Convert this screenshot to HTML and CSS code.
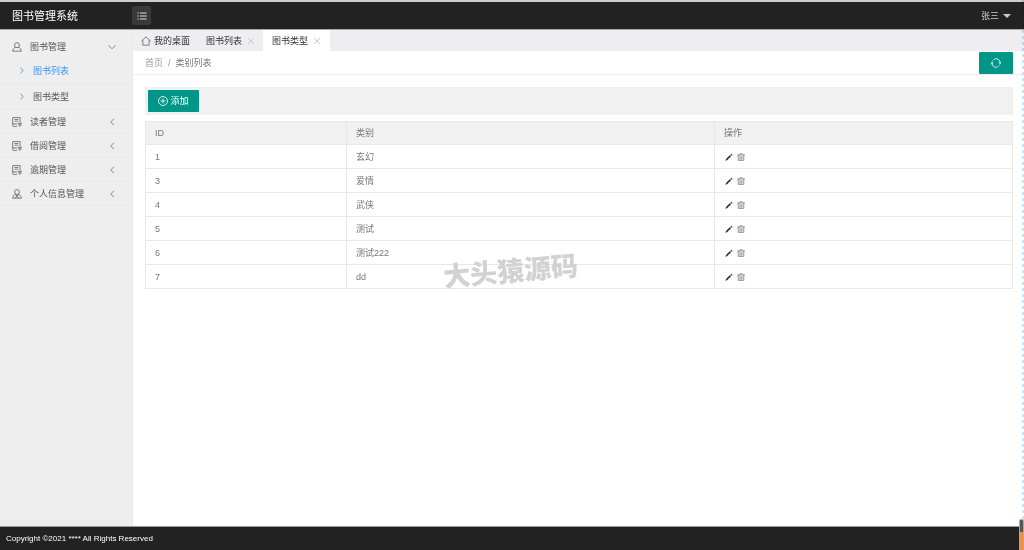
FILE: index.html
```
<!DOCTYPE html>
<html lang="zh-CN">
<head>
<meta charset="utf-8">
<meta name="viewport" content="width=device-width, initial-scale=1">
<title>图书管理系统</title>
<link rel="stylesheet" href="styles.css">
</head>
<body>
<svg class="sprite" aria-hidden="true">
  <symbol id="user" viewBox="0 0 12 12"><circle cx="6" cy="3.800" r="3"/><path d="M4.300 6.300C2.200 7 .900 8.600.700 11h10.600C11.100 8.600 9.800 7 7.700 6.300"/></symbol>
  <symbol id="member" viewBox="0 0 12 12"><circle cx="6" cy="3.600" r="2.900"/><path d="M4.300 6C2.200 7 .900 8.700.700 11h10.600C11.100 8.700 9.800 7 7.700 6M4 11L6 8l2 3M4 7l2 1 2-1"/></symbol>
  <symbol id="book" viewBox="0 0 12 12"><path d="M6 11.300H1.800a1 1 0 0 1-1-1V.700h9v5.600M.800 8.300h5.700M3 3h4.600M3 5h4.600M7 7.500h5M9.400 7.500v4.200M7.500 9.500H11.500"/></symbol>
  <symbol id="down" viewBox="0 0 8 8"><path d="M.500 2.300L4 5.800l3.500-3.500"/></symbol>
  <symbol id="left" viewBox="0 0 8 8"><path d="M6 .800L2.700 4 6 7.200"/></symbol>
  <symbol id="right" viewBox="0 0 8 8"><path d="M2.700.800L6 4 2.700 7.200"/></symbol>
  <symbol id="close" viewBox="0 0 8 8"><path d="M1 1l6 6M7 1L1 7"/></symbol>
  <symbol id="home" viewBox="0 0 12 12"><path d="M.500 6.200L6 1l5.500 5.200M2.300 5v6h7.400V5"/></symbol>
  <symbol id="list" viewBox="0 0 12 12"><path class="bold" d="M.500 2.400H2M3.500 2.400h8M.500 6H2M3.500 6h8M.500 9.600H2M3.500 9.600h8"/></symbol>
  <symbol id="plus" viewBox="0 0 12 12"><circle cx="6" cy="6" r="5.400"/><path d="M6 3v6M3 6h6"/></symbol>
  <symbol id="refresh" viewBox="0 0 12 12"><path d="M4 1.300A5 5 0 0 1 11 6M8 10.700A5 5 0 0 1 1 6M9.300 5l1.600 1.600L12 5M0 7l1.100-1.600L2.700 7"/><path class="faint" d="M1 6A5 5 0 0 1 4 1.300M11 6A5 5 0 0 1 8 10.700"/></symbol>
  <symbol id="edit" viewBox="0 0 8 8"><path class="solid" d="M.500 7.700L1 6.100 5 2.100l1.100 1.100L2.100 7.200zM5.500 1.600l.9-.9 1.100 1.100-.9.900z"/></symbol>
  <symbol id="trash" viewBox="0 0 8 8"><path class="wash" d="M1.200 2h5.600v5.400H1.200z"/><path d="M0 1.900h8M2.700 1.500V.700h2.600v.800M1.200 2v5.400h5.600V2M3.200 3.400v3M4.800 3.400v3"/></symbol>
</svg>
<header class="header">
  <h1 class="brand">图书管理系统</h1>
  <button class="toggle" aria-label="菜单"><svg class="icon"><use href="#list"/></svg></button>
  <button class="account">张三<span class="caret"></span></button>
</header>
<div class="layout">
  <nav class="sidebar">
    <a class="item open" href="#"><svg class="icon"><use href="#user"/></svg><span>图书管理</span><svg class="arrow"><use href="#down"/></svg></a>
    <a class="sub active" href="#"><svg class="chevron"><use href="#right"/></svg>图书列表</a>
    <a class="sub" href="#"><svg class="chevron"><use href="#right"/></svg>图书类型</a>
    <a class="item" href="#"><svg class="icon"><use href="#book"/></svg><span>读者管理</span><svg class="arrow"><use href="#left"/></svg></a>
    <a class="item" href="#"><svg class="icon"><use href="#book"/></svg><span>借阅管理</span><svg class="arrow"><use href="#left"/></svg></a>
    <a class="item" href="#"><svg class="icon"><use href="#book"/></svg><span>逾期管理</span><svg class="arrow"><use href="#left"/></svg></a>
    <a class="item" href="#"><svg class="icon"><use href="#member"/></svg><span>个人信息管理</span><svg class="arrow"><use href="#left"/></svg></a>
  </nav>
  <main class="main">
    <div class="tabs">
      <a class="tab home" href="#"><svg class="icon"><use href="#home"/></svg>我的桌面</a>
      <a class="tab" href="#">图书列表<svg class="close"><use href="#close"/></svg></a>
      <a class="tab current" href="#">图书类型<svg class="close"><use href="#close"/></svg></a>
    </div>
    <div class="crumbs">
      <a href="#">首页</a><span class="slash">/</span><span class="here">类别列表</span>
      <button class="refresh" aria-label="刷新"><svg class="icon"><use href="#refresh"/></svg></button>
    </div>
    <div class="content">
      <div class="toolbar"><button class="add"><svg class="icon"><use href="#plus"/></svg>添加</button></div>
      <table class="table">
        <thead><tr><th class="col-id">ID</th><th class="col-name">类别</th><th>操作</th></tr></thead>
        <tbody>
          <tr><td>1</td><td>玄幻</td><td><button class="act" aria-label="编辑"><svg class="edit"><use href="#edit"/></svg></button><button class="act" aria-label="删除"><svg class="trash"><use href="#trash"/></svg></button></td></tr>
          <tr><td>3</td><td>爱情</td><td><button class="act" aria-label="编辑"><svg class="edit"><use href="#edit"/></svg></button><button class="act" aria-label="删除"><svg class="trash"><use href="#trash"/></svg></button></td></tr>
          <tr><td>4</td><td>武侠</td><td><button class="act" aria-label="编辑"><svg class="edit"><use href="#edit"/></svg></button><button class="act" aria-label="删除"><svg class="trash"><use href="#trash"/></svg></button></td></tr>
          <tr><td>5</td><td>测试</td><td><button class="act" aria-label="编辑"><svg class="edit"><use href="#edit"/></svg></button><button class="act" aria-label="删除"><svg class="trash"><use href="#trash"/></svg></button></td></tr>
          <tr><td>6</td><td>测试222</td><td><button class="act" aria-label="编辑"><svg class="edit"><use href="#edit"/></svg></button><button class="act" aria-label="删除"><svg class="trash"><use href="#trash"/></svg></button></td></tr>
          <tr><td>7</td><td>dd</td><td><button class="act" aria-label="编辑"><svg class="edit"><use href="#edit"/></svg></button><button class="act" aria-label="删除"><svg class="trash"><use href="#trash"/></svg></button></td></tr>
        </tbody>
      </table>
    </div>
  </main>
</div>
<footer class="footer">Copyright ©2021 **** All Rights Reserved</footer>
<div class="watermark">大头猿源码</div>
<div class="edge"></div>
<div class="gauge"></div>
</body>
</html>
```
FILE: styles.css
```
* { box-sizing: border-box; }
body {
  margin: 0;
  min-height: 100vh;
  display: flex;
  flex-direction: column;
  position: relative;
  font: 9px/12px "Liberation Sans", "Noto Sans CJK SC", sans-serif;
  color: #555;
  background: #fff;
}
a { color: inherit; text-decoration: none; }
button { font: inherit; color: inherit; border: 0; padding: 0; background: none; cursor: pointer; }
svg { fill: none; stroke: currentColor; stroke-width: 1; flex: none; }
.sprite { position: absolute; width: 0; height: 0; }
.icon { width: 10px; height: 10px; }
.faint { opacity: .5; }
.bold { stroke-width: 1.3; }
.solid { fill: currentColor; stroke: none; }
.wash { fill: currentColor; stroke: none; opacity: .25; }

.header {
  height: 30px;
  display: flex;
  align-items: center;
  padding: 0 13px 0 12px;
  background: #222;
  color: #fff;
  border-top: 2px solid #c9d0d0;
  border-bottom: 1px solid #aaa;
}
.brand { margin: 0; width: 120px; font-size: 11px; line-height: 16px; font-weight: 400; }
.toggle {
  width: 19px;
  height: 19px;
  display: grid;
  place-items: center;
  background: #393939;
  color: #ddd;
  border-radius: 2px;
}
.account { margin-left: auto; display: flex; align-items: center; gap: 4px; color: #ccc; }
.caret { border: 4px solid transparent; border-top-color: #ccc; border-bottom: 0; }

.layout { flex: 1; display: flex; }
.sidebar { width: 133px; background: #eee; border-right: 1px solid #eaeaea; }
.item {
  height: 24px;
  display: flex;
  align-items: center;
  gap: 8px;
  padding: 0 16px 0 12px;
  border-bottom: 1px solid #e8e8e8;
}
.item .icon { color: #666; }
.item.open { height: 28px; padding-top: 5px; border-bottom: 0; }
.arrow { width: 8px; height: 8px; margin-left: auto; color: #888; }
.sub {
  height: 26px;
  display: flex;
  align-items: center;
  gap: 8px;
  padding-left: 18px;
  border-bottom: 1px solid #e8e8e8;
}
.chevron { width: 7px; height: 7px; color: #888; }
.active, .active .chevron { color: #3d97f5; }

.main { flex: 1; min-width: 0; }
.tabs { height: 21px; display: flex; background: #eeeef0; color: #333; }
.tab { display: flex; align-items: center; gap: 5px; padding: 0 8px; }
.home { gap: 3px; }
.home .icon { color: #666; }
.current { padding: 0 9px; background: #fff; }
.close { width: 8px; height: 8px; color: #ccc; }
.crumbs {
  height: 24px;
  display: flex;
  align-items: center;
  gap: 5px;
  padding: 0 11px 0 12px;
  border-bottom: 1px solid #eee;
  color: #999;
}
.here { color: #777; }
.refresh {
  margin-left: auto;
  width: 34px;
  height: 22px;
  display: grid;
  place-items: center;
  background: #009688;
  color: #fff;
  border-radius: 1px;
}
.content { padding: 12px 11px 12px 12px; }
.toolbar { padding: 3px; background: #f1f1f1; }
.add {
  width: 51px;
  height: 22px;
  display: flex;
  align-items: center;
  justify-content: center;
  gap: 2px;
  background: #009688;
  color: #fff;
  border-radius: 1px;
}
.table { width: 100%; margin-top: 6px; border-collapse: collapse; table-layout: fixed; color: #777; }
.table th, .table td {
  height: 24px;
  padding: 0 9px;
  text-align: left;
  font-weight: 400;
  border: 1px solid #e8e8e8;
}
.table th { height: 23px; background: #f1f1f1; }
.col-id { width: 201px; }
.col-name { width: 368px; }
.act { display: inline-grid; place-items: center; width: 10px; height: 12px; margin-right: 2px; vertical-align: middle; color: #999; }
.act svg { width: 8px; height: 8px; }
.act .edit { color: #333; }

.footer {
  height: 24px;
  padding: 6px;
  background: #222;
  color: #fff;
  font-size: 8px;
  border-top: 1px solid #999;
}
.watermark {
  position: absolute;
  left: 443px;
  top: 253px;
  font: 900 27px/34px "Noto Sans CJK SC", sans-serif;
  color: #d2d2d2;
  transform: rotate(-5deg);
  pointer-events: none;
}
.edge {
  position: absolute;
  top: 0;
  bottom: 24px;
  right: 0;
  width: 2px;
  background: repeating-linear-gradient(#c4e6fa 0 3px, #fff 3px 6px);
  mix-blend-mode: multiply;
}
.gauge {
  position: absolute;
  right: 0;
  bottom: 0;
  width: 5px;
  height: 31px;
  border: 1px solid #aaa;
  border-bottom: 0;
  border-radius: 2px 2px 0 0;
  background: linear-gradient(#555 12px, #e8914e 12px);
}
```
